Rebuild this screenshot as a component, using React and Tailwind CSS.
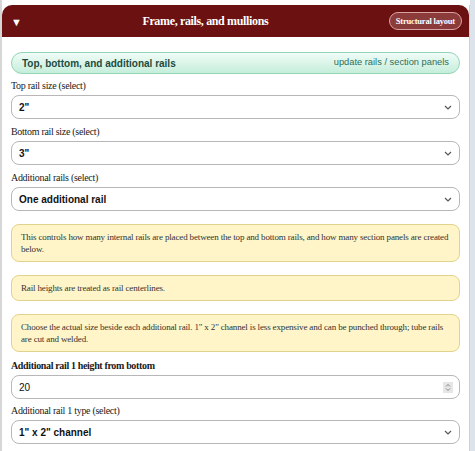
const serif = "font-['Liberation_Serif',_'Times_New_Roman',_serif]";
const sans = "font-['Liberation_Sans',_Arial,_sans-serif]";

function Chevron() {
  return (
    <svg width="8" height="5" viewBox="0 0 8 5" className="shrink-0">
      <path d="M1 1l3 3 3-3" fill="none" stroke="#555" strokeWidth="1.2" />
    </svg>
  );
}

function Label({ children, bold }) {
  return (
    <div
      className={`${serif} ${bold ? 'font-bold text-[10px] tracking-[-0.35px]' : 'text-[10px] tracking-[-0.3px]'} leading-[12px] text-[#1a1a1a] mb-[3px]`}
    >
      {children}
    </div>
  );
}

function SelectBox({ value }) {
  return (
    <div className="h-[24px] rounded-[8px] border border-[#b7b7b7] bg-white flex items-center justify-between pl-[7px] pr-[7px]">
      <span className={`${sans} text-[10px] font-bold text-[#111]`}>{value}</span>
      <Chevron />
    </div>
  );
}

function Note({ children }) {
  return (
    <div className={`${serif} rounded-[8px] border border-[#e2d28c] bg-[#fff5c8] px-[9px] py-[6px] text-[9px] tracking-[-0.15px] leading-[12px] text-[#333]`}>
      {children}
    </div>
  );
}

export default function App() {
  return (
    <div className="w-[475px] h-[451px] overflow-hidden bg-white flex">
      <div className="w-[2px] shrink-0 bg-[#d6d6d6]" />
      <section className="w-[468px] shrink-0 mt-[5px] border-r border-[#d0d0d0] bg-white">
        {/* header bar */}
        <div className="h-[32px] rounded-t-[10px] bg-[#6b1111] flex items-center pl-[9px] pr-[7px]">
          <span className="text-white text-[11px] leading-none">▼</span>
          <h2 className={`${serif} flex-1 text-center text-white font-bold text-[12px] tracking-[-0.35px]`}>
            Frame, rails, and mullions
          </h2>
          <span className={`${serif} h-[18px] px-[6px] flex items-center rounded-full border border-[#d9a3a3] bg-[#8c3b3b] text-white font-bold text-[8.5px] tracking-[-0.2px]`}>
            Structural layout
          </span>
        </div>

        <div className="px-[9px] pt-[15px]">
          <div className="h-[22px] rounded-full border border-[#92d5b6] bg-gradient-to-b from-[#f0fcf7] to-[#c5eedb] flex items-center justify-between px-[10px] mb-[6px]">
            <span className={`${sans} text-[10px] font-bold text-[#1e4b3e]`}>Top, bottom, and additional rails</span>
            <span className={`${sans} text-[9.3px] text-[#2f6e58]`}>update rails / section panels</span>
          </div>

          <Label>Top rail size (select)</Label>
          <SelectBox value={'2"'} />

          <div className="mt-[7px]">
            <Label>Bottom rail size (select)</Label>
            <SelectBox value={'3"'} />
          </div>

          <div className="mt-[7px]">
            <Label>Additional rails (select)</Label>
            <SelectBox value="One additional rail" />
          </div>

          <div className="mt-[13px] flex flex-col gap-[13px]">
            <Note>
              <div className="whitespace-nowrap">
                This controls how many internal rails are placed between the top and bottom rails, and how many section panels are created
              </div>
              <div>below.</div>
            </Note>
            <Note>Rail heights are treated as rail centerlines.</Note>
            <Note>
              <div className="whitespace-nowrap">
                Choose the actual size beside each additional rail. 1" x 2" channel is less expensive and can be punched through; tube rails
              </div>
              <div>are cut and welded.</div>
            </Note>
          </div>

          <div className="mt-[8px]">
            <Label bold>Additional rail 1 height from bottom</Label>
            <div className="h-[24px] rounded-[8px] border border-[#b7b7b7] bg-white flex items-center justify-between pl-[7px] pr-[6px]">
              <span className={`${sans} text-[10px] text-[#111]`}>20</span>
              <span className="w-[10px] h-[11px] bg-[#e6e6e6] flex items-center justify-center">
                <svg width="6" height="9" viewBox="0 0 6 9">
                  <path d="M1 3.5l2-2 2 2M1 5.5l2 2 2-2" fill="none" stroke="#777" strokeWidth="0.9" />
                </svg>
              </span>
            </div>
          </div>

          <div className="mt-[6px]">
            <Label>Additional rail 1 type (select)</Label>
            <SelectBox value={'1" x 2" channel'} />
          </div>
        </div>
      </section>
      <div className="flex-1 bg-[#dde3ea]" />
    </div>
  );
}
